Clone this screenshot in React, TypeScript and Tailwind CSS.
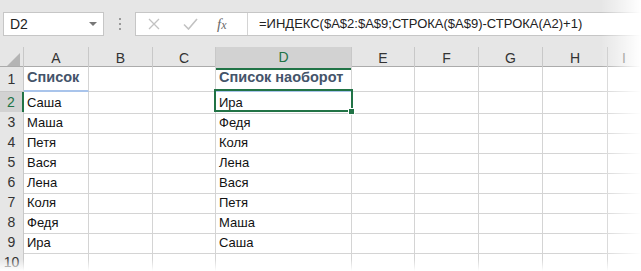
import React from 'react';

const cols = ['A', 'B', 'C', 'D', 'E', 'F', 'G', 'H', 'I'];
const colA = ['Саша', 'Маша', 'Петя', 'Вася', 'Лена', 'Коля', 'Федя', 'Ира'];
const colD = [...colA].reverse();

const gridCols = 'grid grid-cols-[24px_65px_64px_63px_136px_63px_64px_64px_65px_1fr]';

function Toolbar() {
  return (
    <div className="h-[47px] bg-[#e6e6e6] flex items-start pt-[12px] pl-[3px]">
      {/* name box */}
      <div className="w-[101px] h-[24px] bg-white border border-[#c6c6c6] flex items-center justify-between pl-[6px] pr-[6px]">
        <span className="text-[14px] text-[#222]">D2</span>
        <svg width="8" height="5" viewBox="0 0 8 5">
          <path d="M0 0 L8 0 L4 4 Z" fill="#777" />
        </svg>
      </div>
      <div className="w-[31px] h-[24px] flex flex-col items-center justify-center gap-[3px]">
        <span className="w-[2px] h-[2px] bg-[#9a9a9a]" />
        <span className="w-[2px] h-[2px] bg-[#9a9a9a]" />
        <span className="w-[2px] h-[2px] bg-[#9a9a9a]" />
      </div>
      {/* formula box */}
      <div className="flex-1 h-[24px] bg-white border border-[#c6c6c6] border-r-0 flex items-center">
        <div className="w-[112px] h-full flex items-center border-r border-[#d4d4d4]">
          <svg className="ml-[12px]" width="12" height="12" viewBox="0 0 12 12">
            <path d="M1 1 L11 11 M11 1 L1 11" stroke="#c2c2c2" strokeWidth="1.3" fill="none" />
          </svg>
          <svg className="ml-[23px]" width="15" height="12" viewBox="0 0 15 12">
            <path d="M1 6.5 L5.5 11 L14 1" stroke="#c2c2c2" strokeWidth="1.6" fill="none" />
          </svg>
          <span className="ml-[19px] text-[15px] italic text-[#6a6a6a] leading-none" style={{ fontFamily: '"Liberation Serif", serif' }}>
            f<span className="text-[12px]">x</span>
          </span>
        </div>
        <span className="pl-[11px] text-[13px] text-[#222] whitespace-nowrap">
          =ИНДЕКС($A$2:$A$9;СТРОКА($A$9)-СТРОКА(A2)+1)
        </span>
      </div>
    </div>
  );
}

function HeaderRow() {
  return (
    <div className={`${gridCols} h-[20px] bg-[#e6e6e6] border-b border-[#ababab]`}>
      <div className="border-r border-[#c8c8c8] relative">
        <svg className="absolute right-[3px] bottom-[3px]" width="13" height="13" viewBox="0 0 13 13">
          <path d="M13 0 L13 13 L0 13 Z" fill="#b4b4b4" />
        </svg>
      </div>
      {cols.map((c) =>
        c === 'D' ? (
          <div key={c} className="bg-[#d2d2d2] border-r border-[#c8c8c8] border-b-2 border-b-[#217346] -mb-px flex items-center justify-center text-[14px] text-[#217346]">
            {c}
          </div>
        ) : (
          <div key={c} className="border-r border-[#c8c8c8] flex items-center justify-center text-[14px] text-[#333]">
            {c}
          </div>
        )
      )}
    </div>
  );
}

function Row({ n, a, d, head }: { n: number; a?: string; d?: string; head?: boolean }) {
  const selected = n === 2;
  const h = n === 1 ? 'h-[25px]' : 'h-[20px]';
  const txt = head ? 'font-bold text-[14.5px] text-[#44546a]' : 'text-[13px] text-[#111]';
  return (
    <div className={`${gridCols} ${h}`}>
      <div
        className={
          selected
            ? 'bg-[#d2d2d2] border-b border-[#c8c8c8] border-r-2 border-r-[#217346] flex items-center justify-center text-[14px] text-[#217346]'
            : 'bg-[#e6e6e6] border-b border-r border-[#c8c8c8] flex items-center justify-center text-[14px] text-[#333]'
        }
      >
        {n}
      </div>
      {cols.map((c) => {
        let content: string | undefined;
        if (c === 'A') content = a;
        if (c === 'D') content = d;
        const blue = head && (c === 'A' || c === 'D');
        return (
          <div
            key={c}
            className={`border-r border-[#d4d4d4] ${blue ? 'border-b-2 border-b-[#a9c4eb]' : 'border-b border-[#d4d4d4]'} flex items-end pl-[3px] pb-[1px] whitespace-nowrap overflow-visible ${txt}`}
          >
            {content}
          </div>
        );
      })}
    </div>
  );
}

export default function App() {
  return (
    <div className="relative w-[641px] h-[271px] overflow-hidden bg-white" style={{ fontFamily: '"Liberation Sans", Arial, sans-serif' }}>
      <Toolbar />
      <HeaderRow />
      <Row n={1} a="Список" d="Список наоборот" head />
      {colA.map((name, i) => (
        <Row key={i} n={i + 2} a={name} d={colD[i]} />
      ))}
      <Row n={10} />

      {/* selection of D2 */}
      <div className="absolute left-[214px] top-[89px] w-[139px] h-[23px] border-2 border-[#217346]" />
      <div className="absolute left-[348px] top-[108px] w-[7px] h-[7px] bg-[#217346] border border-white" />

      {/* faded edges */}
      <div className="absolute right-0 top-0 h-full w-[40px] bg-gradient-to-r from-transparent to-white" />
      <div className="absolute left-0 bottom-0 w-full h-[12px] bg-gradient-to-b from-transparent to-white" />
    </div>
  );
}
